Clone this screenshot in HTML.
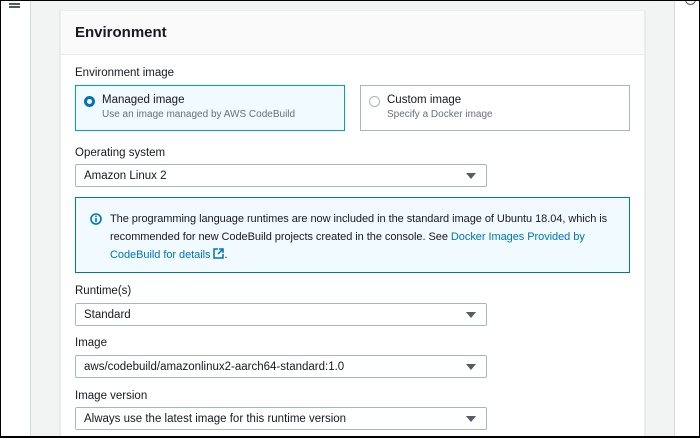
<!DOCTYPE html>
<html><head><style>
*{box-sizing:border-box;margin:0;padding:0}
html,body{width:700px;height:438px;overflow:hidden}
body{font-family:"Liberation Sans",sans-serif;color:#16191f;background:#f2f3f3;position:relative}
.frame{position:absolute;left:0;top:0;width:700px;height:438px;border:1px solid #000;border-bottom:2px solid #000;pointer-events:none;z-index:10}
.side{position:absolute;left:0;top:0;width:31px;height:438px;background:#fff;border-right:1px solid #d5dbdb}
.rside{position:absolute;left:674px;top:0;width:26px;height:438px;background:#fff;border-left:1px solid #d5dbdb}
.panel{position:absolute;left:60px;top:10px;width:585px;height:428px;background:#fff;border:1px solid #eaeded;border-bottom:none;box-shadow:0 1px 1px rgba(0,28,36,.2)}
.hdr{height:44px;background:#fafafa;border-bottom:1px solid #eaeded;padding:13px 0 0 14px;font-weight:bold;font-size:15px}
.lbl{position:absolute;left:75px;font-size:11.5px;color:#16191f}
.sel{position:absolute;left:75px;width:412px;height:23px;border:1px solid #aab7b8;border-radius:2px;background:#fff;font-size:11.5px;padding:5px 0 0 8px}
.sel:after{content:"";position:absolute;right:10px;top:8px;border-left:5px solid transparent;border-right:5px solid transparent;border-top:6px solid #545b64}
.card{position:absolute;top:85px;height:46px;border:1px solid #aab7b8;padding:8px 0 0 26px}
.card b{font-weight:normal;font-size:11.5px;display:block}
.card span{font-size:10px;color:#687078;display:block;margin-top:3px}
.rad{position:absolute;left:8px;top:10px;width:11px;height:11px;border-radius:50%}
.info{position:absolute;left:75px;top:197px;width:555px;height:76px;background:#f1faff;border:1px solid #0073bb;padding:12px 10px 0 34px;font-size:11px;line-height:18px;letter-spacing:-0.05px}
.info a{color:#0073bb;text-decoration:none}
</style></head><body>
<div class="side"><div style="position:absolute;left:9px;top:3px;width:11px;height:2px;background:#545b64;box-shadow:0 3px 0 #545b64"></div><div style="position:absolute;left:9px;top:0px;width:11px;height:1px;background:#545b64"></div></div>
<div class="rside"><div style="position:absolute;left:10px;top:-6px;width:11px;height:11px;border:1.5px solid #545b64;border-radius:50%"></div></div>
<div class="panel"><div class="hdr">Environment</div></div>
<div class="lbl" style="top:67px">Environment image</div>
<div class="card" style="left:75px;width:270px;background:#f1faff;border-color:#00a1c9">
<div class="rad" style="border:3.5px solid #0073bb;background:#fff"></div><b>Managed image</b><span>Use an image managed by AWS CodeBuild</span></div>
<div class="card" style="left:360px;width:270px">
<div class="rad" style="border:1px solid #aab7b8"></div><b>Custom image</b><span>Specify a Docker image</span></div>
<div class="lbl" style="top:147px">Operating system</div>
<div class="sel" style="top:164px">Amazon Linux 2</div>
<div class="info"><svg style="position:absolute;left:14px;top:15px" width="12" height="12" viewBox="0 0 12 12"><circle cx="6" cy="6" r="5" fill="none" stroke="#0073bb" stroke-width="1.6"/><rect x="5.2" y="5" width="1.6" height="4" fill="#0073bb"/><rect x="5.2" y="2.6" width="1.6" height="1.5" fill="#0073bb"/></svg>
The programming language runtimes are now included in the standard image of Ubuntu 18.04, which is recommended for new CodeBuild projects created in the console. See <a>Docker Images Provided by CodeBuild for details <svg width="11" height="11" viewBox="0 0 11 11" style="vertical-align:-1px"><path d="M5 1H1v9h9V6M6 1h4v4M10 1L5 6" fill="none" stroke="#0073bb" stroke-width="1.5"/></svg></a>.</div>
<div class="lbl" style="top:285px">Runtime(s)</div>
<div class="sel" style="top:303px">Standard</div>
<div class="lbl" style="top:337px">Image</div>
<div class="sel" style="top:355px">aws/codebuild/amazonlinux2-aarch64-standard:1.0</div>
<div class="lbl" style="top:390px">Image version</div>
<div class="sel" style="top:407px">Always use the latest image for this runtime version</div>
<div class="frame"></div>
</body></html>
